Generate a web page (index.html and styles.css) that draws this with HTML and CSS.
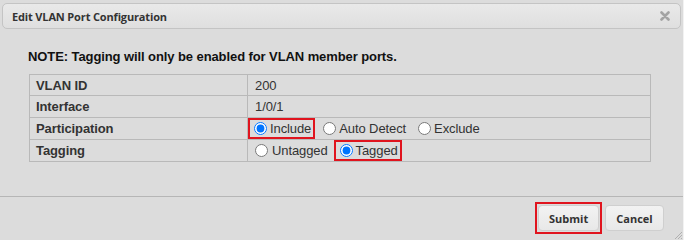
FILE: index.html
```html
<!DOCTYPE html>
<html>
<head>
<meta charset="utf-8">
<link rel="stylesheet" href="styles.css">
</head>
<body>
<div class="dialog">
  <div class="titlebar">
    <span class="title">Edit VLAN Port Configuration</span>
    <svg class="close" width="10" height="10" viewBox="0 0 10 10"><path d="M1.5 1.5 L8.5 8.5 M8.5 1.5 L1.5 8.5" stroke="#a3a3a3" stroke-width="2.6" stroke-linecap="round"/></svg>
  </div>
  <div class="content">
    <p class="note">NOTE: Tagging will only be enabled for VLAN member ports.</p>
    <table class="cfg">
      <tr class="r1"><th>VLAN ID</th><td>200</td></tr>
      <tr class="r2"><th>Interface</th><td>1/0/1</td></tr>
      <tr class="r1"><th>Participation</th><td class="radios">
        <label class="opt hl"><input type="radio" name="p" checked>Include</label><label class="opt"><input type="radio" name="p">Auto Detect</label><label class="opt"><input type="radio" name="p">Exclude</label>
      </td></tr>
      <tr class="r2"><th>Tagging</th><td class="radios">
        <label class="opt first"><input type="radio" name="t">Untagged</label><label class="opt hl"><input type="radio" name="t" checked>Tagged</label>
      </td></tr>
    </table>
  </div>
  <div class="buttonpane">
    <span class="btnhl"><button class="btn">Submit</button></span>
    <button class="btn">Cancel</button>
  </div>
  <svg class="resize" width="10" height="10" viewBox="0 0 10 10"><path d="M9 2 L2 9 M9 5 L5 9 M9 8 L8 9" stroke="#b0b0b0" stroke-width="1"/></svg>
</div>
</body>
</html>
```
FILE: styles.css
```css
html, body {
  margin: 0;
  padding: 0;
  background: #dcdcdc;
}
.dialog {
  position: relative;
  width: 683px;
  height: 240px;
  border-right: 1px solid #f2f2f2;
  background: #dcdcdc;
  display: flex;
  flex-direction: column;
  overflow: hidden;
}
.titlebar {
  margin: 3px 2px 0 2px;
  height: 24px;
  border: 1px solid #c4c4c4;
  border-radius: 5px;
  background: linear-gradient(#e9e9e9, #dfdfdf);
  display: flex;
  align-items: center;
  justify-content: space-between;
  padding: 0 10px 0 9px;
}
.title {
  font-family: "Open Sans", "DejaVu Sans", sans-serif;
  font-weight: 700;
  font-size: 11px;
  letter-spacing: -0.15px;
  color: #333;
}
.close {
  display: block;
}
.content {
  padding: 20px 32px 0 29px;
}
.note {
  margin: 0 0 10px -1px;
  font-family: "Liberation Sans", Arial, sans-serif;
  font-weight: 700;
  font-size: 13px;
  line-height: 15px;
  letter-spacing: -0.09px;
  color: #111;
}
.cfg {
  width: 100%;
  border-collapse: collapse;
  border: 1px solid #b9b9b9;
  font-family: "Liberation Sans", Arial, sans-serif;
  font-size: 13px;
  letter-spacing: -0.1px;
  color: #333;
}
.cfg th, .cfg td {
  border: 1px solid #b9b9b9;
  padding: 0;
  text-align: left;
  vertical-align: middle;
}
.cfg th {
  width: 211px;
  padding-left: 6px;
  font-weight: 700;
}
.cfg td {
  padding-left: 7px;
}
.cfg .r1 { height: 21px; }
.cfg .r2 { height: 22px; }
.cfg td.radios {
  padding-left: 0;
  line-height: 15px;
  white-space: nowrap;
}
.opt {
  display: inline-flex;
  align-items: center;
  gap: 3px;
  margin-right: 2px;
  padding: 0 2px 0 4px;
  border: 2px solid transparent;
  height: 17px;
  vertical-align: middle;
}
.opt.first {
  padding-left: 5px;
  gap: 4px;
}
.opt.hl {
  border-color: #e0141e;
}
.opt input {
  margin: 0;
  width: 13px;
  height: 13px;
}
.buttonpane {
  margin-top: 34px;
  border-top: 1px solid #b6b6b6;
  display: flex;
  justify-content: flex-end;
  align-items: flex-start;
  padding: 5px 19px 0 0;
  gap: 3px;
}
.btnhl {
  border: 2px solid #e0141e;
  padding: 1px;
  display: flex;
}
.btn {
  font-family: "Open Sans", "DejaVu Sans", sans-serif;
  font-weight: 700;
  font-size: 11px;
  color: #333;
  background: linear-gradient(#f2f2f2, #e8e8e8);
  border: 1px solid #cfcfcf;
  border-radius: 4px;
  height: 26px;
  padding: 0 10px;
  margin: 0;
}
.btnhl .btn {
  width: 61px;
}
.btnhl + .btn {
  width: 59px;
  margin-top: 3px;
}
.resize {
  position: absolute;
  right: 0;
  bottom: 0;
}
```
